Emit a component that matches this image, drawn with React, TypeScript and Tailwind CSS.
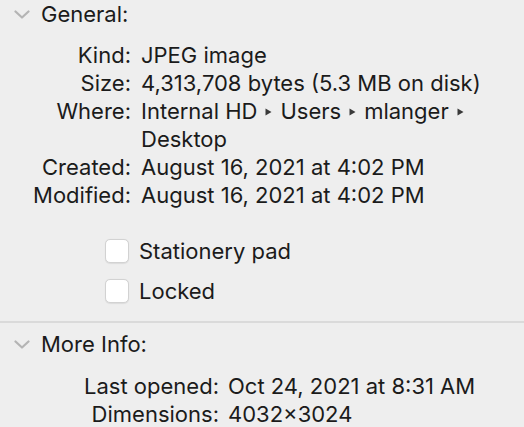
import React from 'react';

const Chevron = () => (
  <svg width="16" height="9" viewBox="0 0 16 9" className="shrink-0">
    <path d="M1.5 1.5 L8 7.5 L14.5 1.5" fill="none" stroke="#b4b4b4" strokeWidth="2.2" strokeLinecap="round" strokeLinejoin="round" />
  </svg>
);

const Tri = () => (
  <svg width="7" height="8" viewBox="0 0 7 8" className="inline-block mx-[8px] align-middle relative -top-[1px]">
    <path d="M0.5 0.5 L6.5 4 L0.5 7.5 Z" fill="#3a3a3a" />
  </svg>
);

function SectionHeader({ title }: { title: string }) {
  return (
    <div className="flex items-center h-[28px] pl-[14px] gap-[11px]">
      <Chevron />
      <span>{title}</span>
    </div>
  );
}

function Checkbox({ label }: { label: string }) {
  return (
    <div className="flex items-center h-[40px] pl-[105px] gap-[10px]">
      <div className="w-[24px] h-[24px] rounded-[5px] bg-white border border-[#d2d2d2] shadow-[0_0.5px_1px_rgba(0,0,0,0.08)]" />
      <span>{label}</span>
    </div>
  );
}

export default function App() {
  const general: [string, React.ReactNode][] = [
    ['Kind:', 'JPEG image'],
    ['Size:', '4,313,708 bytes (5.3 MB on disk)'],
    [
      'Where:',
      <>
        Internal HD<Tri />Users<Tri />mlanger<Tri />
      </>,
    ],
    ['', 'Desktop'],
    ['Created:', 'August 16, 2021 at 4:02 PM'],
    ['Modified:', 'August 16, 2021 at 4:02 PM'],
  ];

  const moreInfo: [string, string][] = [
    ['Last opened:', 'Oct 24, 2021 at 8:31 AM'],
    ['Dimensions:', '4032×3024'],
  ];

  return (
    <div className="w-[524px] h-[427px] overflow-hidden bg-[#eeeeee] text-[#1b1b1b] text-[22px] leading-[28px] font-['Inter','Liberation_Sans',sans-serif]">
      <SectionHeader title="General:" />

      <div className="grid grid-cols-[131px_1fr] gap-x-[10px] mt-[13px]">
        {general.map(([label, value], i) => (
          <React.Fragment key={i}>
            <div className="text-right whitespace-nowrap">{label}</div>
            <div className="whitespace-nowrap">{value}</div>
          </React.Fragment>
        ))}
      </div>

      <div className="mt-[22px]">
        <Checkbox label="Stationery pad" />
        <Checkbox label="Locked" />
      </div>

      <div className="mt-[10px] h-[2px] bg-[#dadada]" />

      <div className="mt-[7px]">
        <SectionHeader title="More Info:" />
      </div>

      <div className="grid grid-cols-[219px_1fr] gap-x-[9px] mt-[14px]">
        {moreInfo.map(([label, value]) => (
          <React.Fragment key={label}>
            <div className="text-right whitespace-nowrap">{label}</div>
            <div className="whitespace-nowrap">{value}</div>
          </React.Fragment>
        ))}
      </div>
    </div>
  );
}
